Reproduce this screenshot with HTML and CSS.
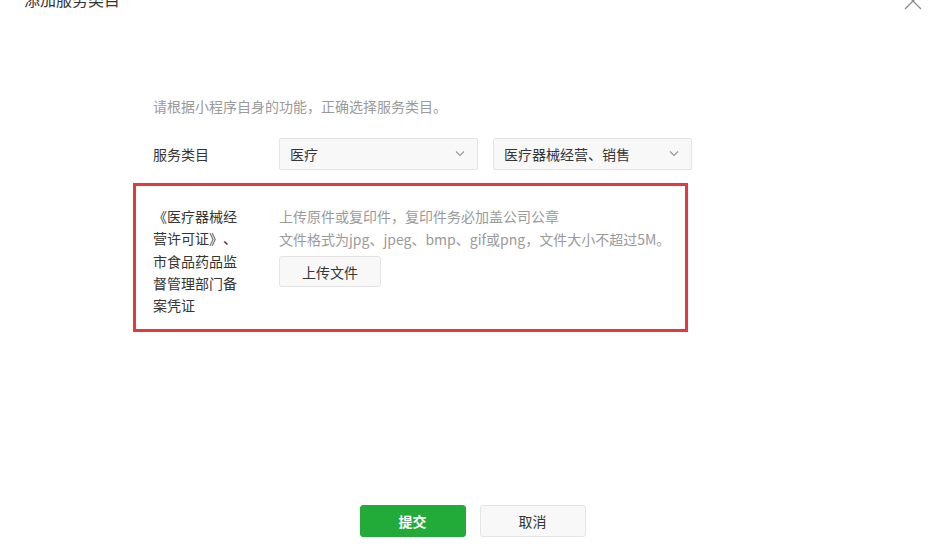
FILE: index.html
```html
<!DOCTYPE html>
<html lang="zh">
<head>
<meta charset="utf-8">
<link rel="stylesheet" href="styles.css">
</head>
<body>
<div class="dialog">
  <div class="header">
    <div class="title">添加服务类目</div>
    <div class="close"><svg width="18" height="18" viewBox="0 0 18 18"><path d="M1 1L17 17M17 1L1 17" stroke="#8a8a8a" stroke-width="1.3" fill="none"/></svg></div>
  </div>
  <div class="body">
    <p class="intro">请根据小程序自身的功能，正确选择服务类目。</p>
    <div class="row">
      <div class="row-label">服务类目</div>
      <div class="select"><span>医疗</span><svg width="10" height="6" viewBox="0 0 10 6"><path d="M1 0.5L5 4.5L9 0.5" stroke="#9a9a9a" stroke-width="1.2" fill="none"/></svg></div>
      <div class="select"><span>医疗器械经营、销售</span><svg width="10" height="6" viewBox="0 0 10 6"><path d="M1 0.5L5 4.5L9 0.5" stroke="#9a9a9a" stroke-width="1.2" fill="none"/></svg></div>
    </div>
    <div class="cert">
      <div class="cert-label">《医疗器械经营许可证》、市食品药品监督管理部门备案凭证</div>
      <div class="cert-main">
        <div class="hint">上传原件或复印件，复印件务必加盖公司公章</div>
        <div class="hint">文件格式为jpg、jpeg、bmp、gif或png，文件大小不超过5M。</div>
        <button class="btn upload">上传文件</button>
      </div>
    </div>
  </div>
  <div class="footer">
    <button class="btn primary">提交</button>
    <button class="btn">取消</button>
  </div>
</div>
</body>
</html>
```
FILE: styles.css
```css
* { box-sizing: border-box; }
html, body { margin: 0; padding: 0; background: #fff; }
body {
  font-family: "Noto Sans CJK SC", "Microsoft YaHei", sans-serif;
  font-size: 14px;
  color: #353535;
  overflow: hidden;
  text-spacing-trim: space-all;
}
.dialog {
  width: 937px;
  height: 549px;
  display: flex;
  flex-direction: column;
}
.header {
  display: flex;
  justify-content: space-between;
  align-items: center;
  height: 24px;
  margin-top: -13px;
  padding: 0 15px 0 24px;
}
.title {
  font-size: 16px;
  line-height: 24px;
  color: #353535;
}
.close { display: flex; margin-top: 4px; }
.body {
  padding-left: 153px;
  flex: 1;
}
.intro {
  margin: 85px 0 0;
  line-height: 20px;
  color: #9a9a9a;
}
.row {
  display: flex;
  align-items: center;
  margin-top: 22px;
}
.row-label { width: 126px; }
.select {
  width: 199px;
  height: 32px;
  border: 1px solid #e4e4e4;
  border-radius: 2px;
  background: #f8f8f8;
  display: flex;
  align-items: center;
  justify-content: space-between;
  padding: 0 12px 0 10px;
  margin-right: 15px;
}
.cert {
  width: 555px;
  height: 149px;
  margin: 13px 0 0 -20px;
  border: 3px solid #e6393d;
  display: flex;
  padding: 19px 0 0 17px;
}
.cert-label {
  width: 92px;
  line-height: 22.3px;
  margin-right: 34px;
}
.cert-main { display: flex; flex-direction: column; align-items: flex-start; }
.hint {
  color: #9a9a9a;
  line-height: 22.5px;
}
.btn {
  font-family: inherit;
  font-size: 14px;
  color: #353535;
  background: #f8f8f8;
  border: 1px solid #e4e4e4;
  border-radius: 3px;
  height: 31px;
  cursor: pointer;
  text-spacing-trim: space-all;
}
.upload {
  width: 102px;
  margin-top: 6px;
}
.footer {
  display: flex;
  justify-content: center;
  gap: 14px;
  padding: 0 0 12px 8px;
}
.footer .btn { width: 106px; height: 32px; }
.primary {
  background: #22ab38;
  border-color: #22ab38;
  color: #fff;
  font-weight: bold;
}
```
